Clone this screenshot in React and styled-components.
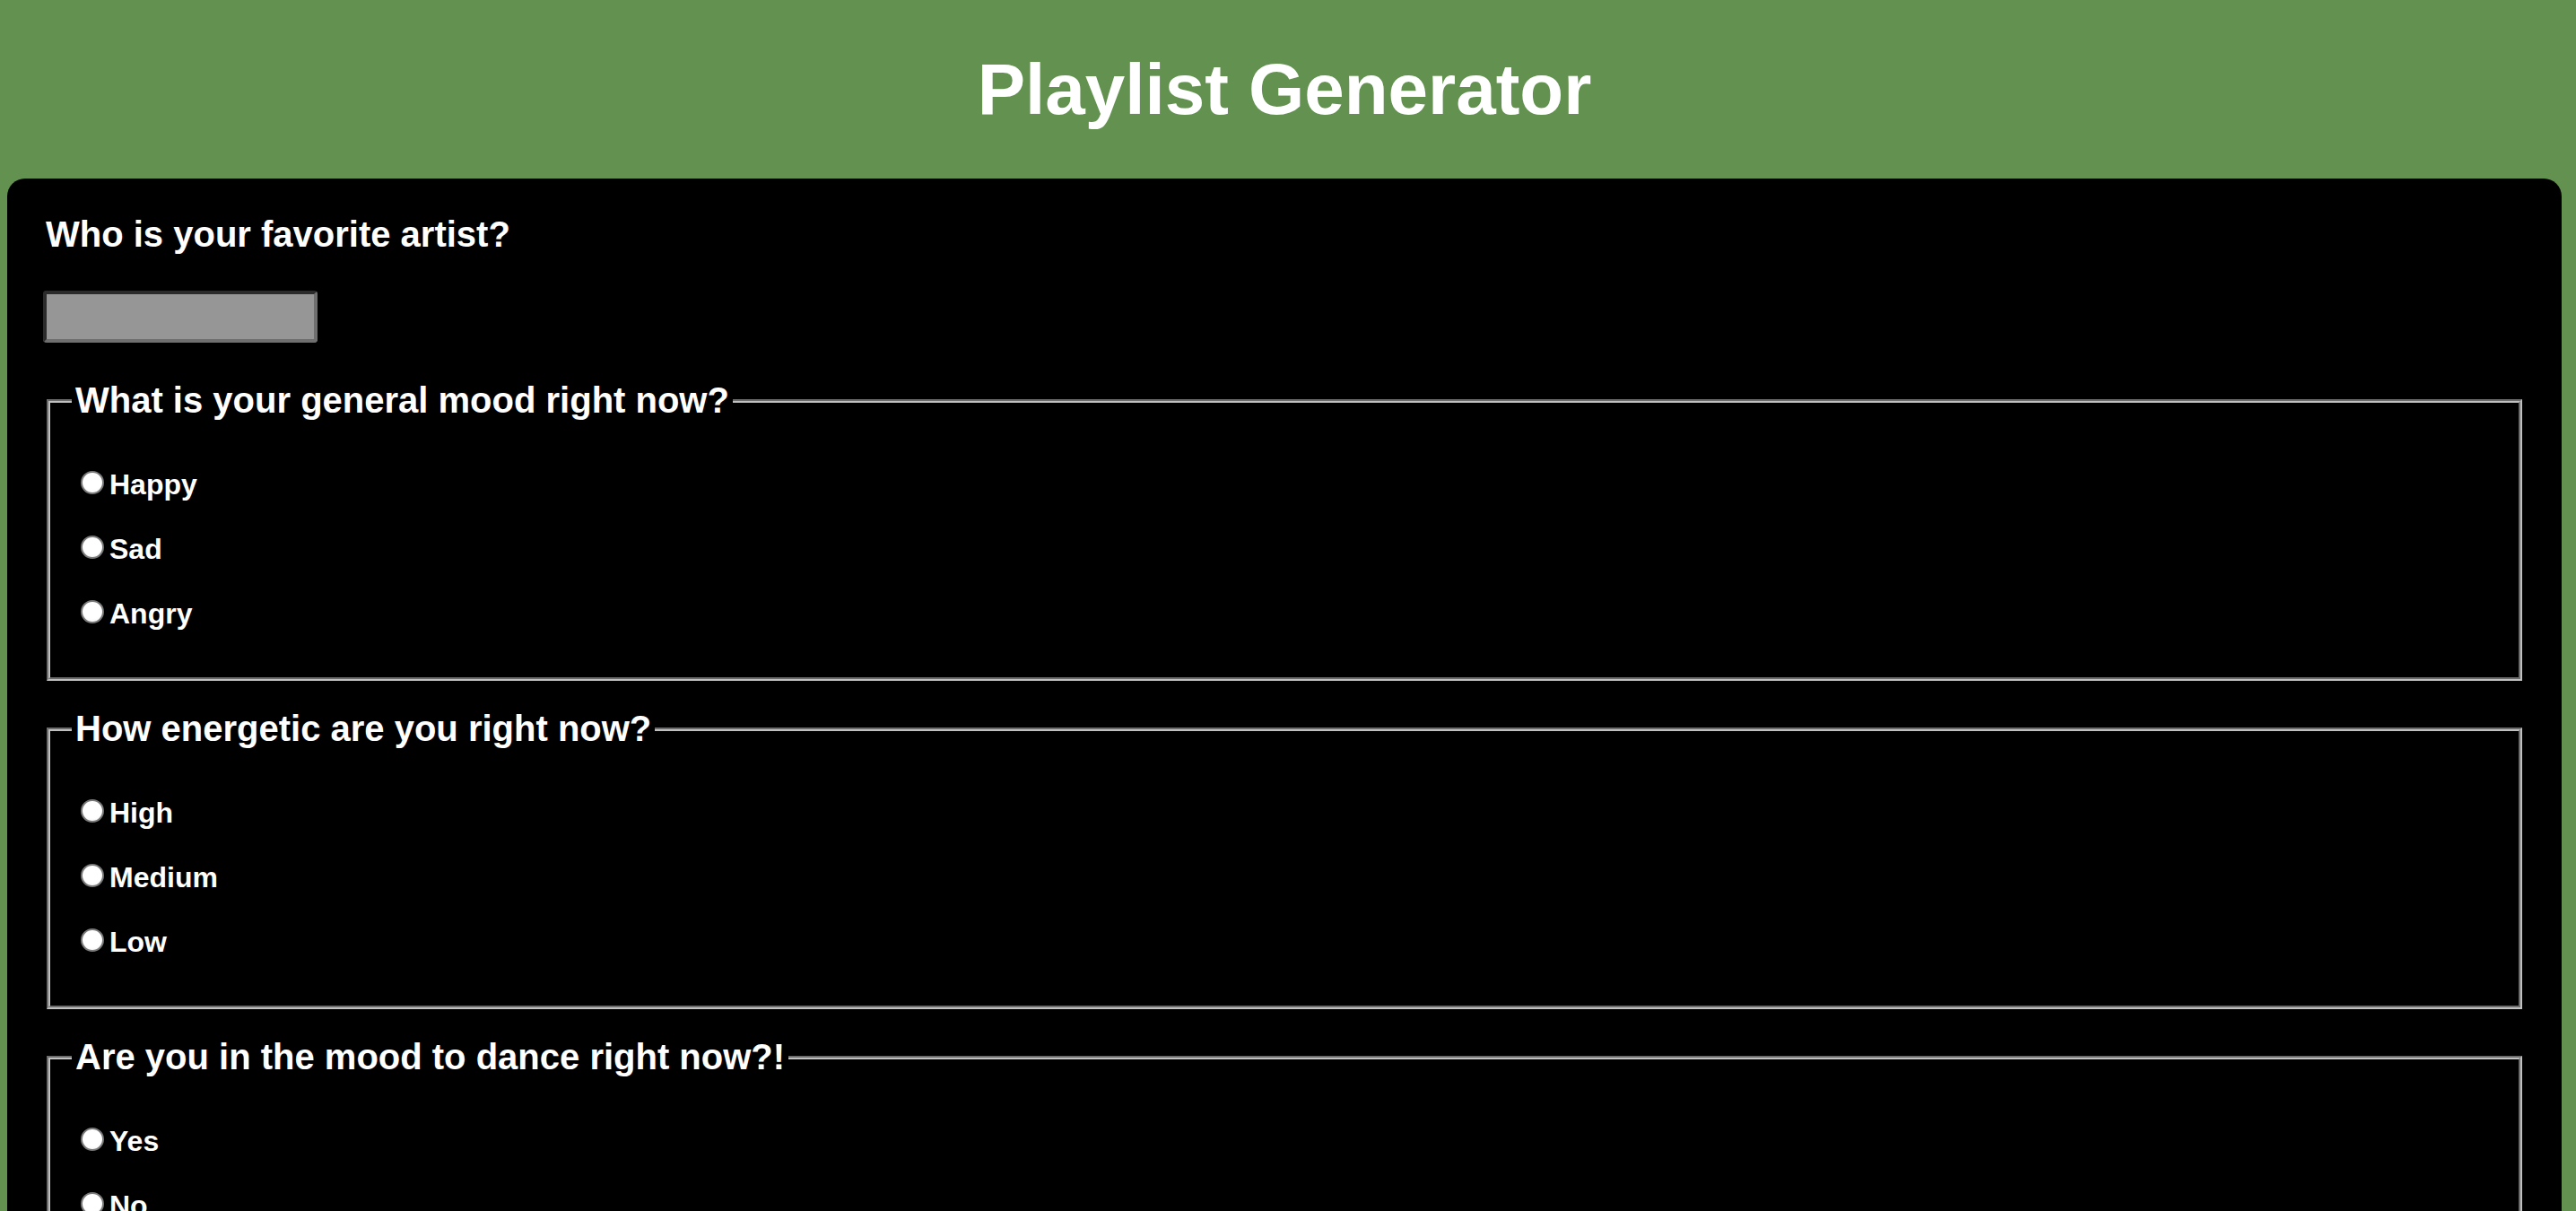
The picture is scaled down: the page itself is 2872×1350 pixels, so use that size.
import React from "react";
import styled, { createGlobalStyle } from "styled-components";

const Global = createGlobalStyle`
  html, body {
    margin: 0;
    padding: 0;
    background: #63914f;
  }
  body {
    font-family: "Liberation Sans", Arial, Helvetica, sans-serif;
    color: #ffffff;
  }
  * { box-sizing: border-box; }
`;

const Page = styled.div`
  min-height: 1350px;
  background: #63914f;
  padding: 0 16px 0 8px;
`;

const Header = styled.header`
  padding: 55px 0 54px;
  text-align: center;
`;

const Title = styled.h1`
  margin: 0;
  font-size: 80px;
  line-height: 90px;
  font-weight: 700;
  color: #ffffff;
`;

const Card = styled.form`
  background: #000000;
  border-radius: 20px 20px 0 0;
  padding: 40px 40px 80px;
  min-height: 1200px;
`;

const Question = styled.h3`
  margin: 0;
  padding-left: 3px;
  font-size: 40px;
  font-weight: 700;
  line-height: normal;
  color: #ffffff;
`;

const TextInput = styled.input`
  display: block;
  margin: 40px 0 42px;
  width: 306px;
  height: 58px;
  background: #969696;
  border-style: solid;
  border-width: 4px;
  border-color: #2b2b2b #6f6f6f #6f6f6f #2b2b2b;
  border-radius: 4px;
  font-family: inherit;
  font-size: 26px;
  color: #000;
  padding: 0 6px;
  outline: none;
`;

const Group = styled.fieldset`
  margin: 0 4px 31px;
  padding: 51px 24px 51px;
  border: 4px groove rgb(192, 192, 192);
  min-inline-size: 0;
`;

const Legend = styled.legend`
  padding: 0 4px;
  font-size: 40px;
  font-weight: 700;
  line-height: normal;
  color: #ffffff;
`;

const Options = styled.div`
  display: flex;
  flex-direction: column;
  gap: 32px;
`;

const Option = styled.label`
  display: flex;
  align-items: center;
  height: 40px;
  line-height: 40px;
  font-size: 32px;
  font-weight: 700;
  color: #ffffff;
  cursor: pointer;
`;

const Radio = styled.input.attrs({ type: "radio" })`
  appearance: none;
  -webkit-appearance: none;
  flex: none;
  width: 26px;
  height: 26px;
  margin: 0 6px 4px 10px;
  border-radius: 50%;
  border: 2px solid #7a7a7a;
  background: radial-gradient(circle at 50% 40%, #ffffff 60%, #ececec 100%);
  cursor: pointer;
  &:checked {
    box-shadow: inset 0 0 0 5px #ffffff;
    background: #0075ff;
    border-color: #0075ff;
  }
`;

const Submit = styled.button`
  margin: 8px 4px 0;
  padding: 12px 28px;
  font-family: inherit;
  font-size: 32px;
  font-weight: 700;
  background: #63914f;
  color: #ffffff;
  border: none;
  border-radius: 12px;
`;

const questions = [
  {
    name: "mood",
    legend: "What is your general mood right now?",
    options: ["Happy", "Sad", "Angry"],
  },
  {
    name: "energy",
    legend: "How energetic are you right now?",
    options: ["High", "Medium", "Low"],
  },
  {
    name: "dance",
    legend: "Are you in the mood to dance right now?!",
    options: ["Yes", "No"],
  },
];

export default function App() {
  return (
    <>
      <Global />
      <Page>
        <Header>
          <Title>Playlist Generator</Title>
        </Header>
        <Card onSubmit={(e) => e.preventDefault()}>
          <Question>Who is your favorite artist?</Question>
          <TextInput type="text" aria-label="Favorite artist" />
          {questions.map((q) => (
            <Group key={q.name}>
              <Legend>{q.legend}</Legend>
              <Options>
                {q.options.map((o) => (
                  <Option key={o}>
                    <Radio name={q.name} value={o.toLowerCase()} />
                    {o}
                  </Option>
                ))}
              </Options>
            </Group>
          ))}
          <Submit type="submit">Generate Playlist</Submit>
        </Card>
      </Page>
    </>
  );
}
